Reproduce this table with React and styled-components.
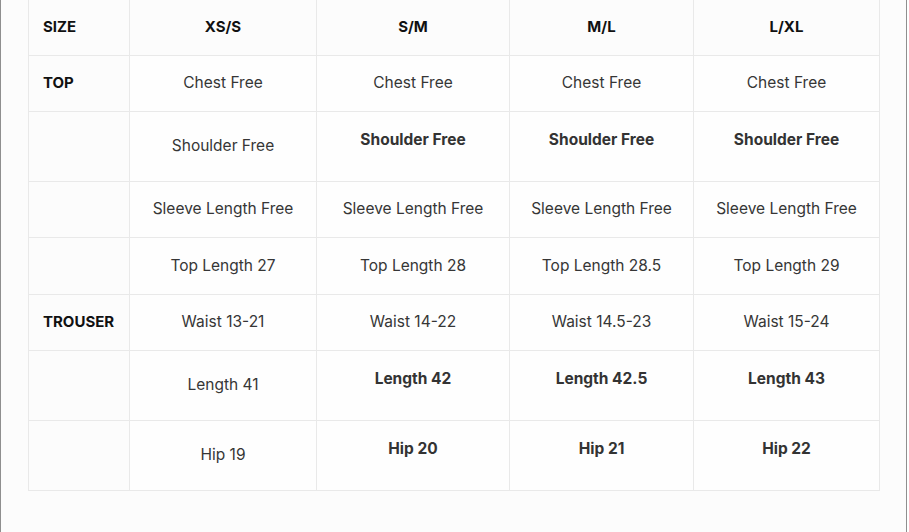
import styled, { createGlobalStyle } from "styled-components";

const GlobalStyle = createGlobalStyle`
  html, body {
    margin: 0;
    padding: 0;
    background: #ffffff;
  }
  * {
    box-sizing: border-box;
  }
`;

const columns = ["SIZE", "XS/S", "S/M", "M/L", "L/XL"];
const widths = [101, 187, 193, 184, 186];

// rows: label, height, cells; tall rows get bold text in the later columns
const rows = [
  { label: "TOP", h: 56, cells: ["Chest Free", "Chest Free", "Chest Free", "Chest Free"] },
  { tall: true, h: 70, cells: ["Shoulder Free", "Shoulder Free", "Shoulder Free", "Shoulder Free"] },
  { h: 56, cells: ["Sleeve Length Free", "Sleeve Length Free", "Sleeve Length Free", "Sleeve Length Free"] },
  { h: 57, cells: ["Top Length 27", "Top Length 28", "Top Length 28.5", "Top Length 29"] },
  { label: "TROUSER", h: 56, cells: ["Waist 13-21", "Waist 14-22", "Waist 14.5-23", "Waist 15-24"] },
  { tall: true, h: 70, cells: ["Length 41", "Length 42", "Length 42.5", "Length 43"] },
  { tall: true, h: 70, cells: ["Hip 19", "Hip 20", "Hip 21", "Hip 22"] },
];

const Page = styled.div`
  width: 907px;
  min-height: 100vh;
  padding: 0 27px;
  background: #fcfcfc;
  border-left: 1px solid #8f8f8f;
  border-right: 1px solid #8f8f8f;
  font-family: Inter, "Liberation Sans", sans-serif;
  overflow: hidden;
`;

const Table = styled.table`
  width: 851px;
  margin-top: -1px;
  border-collapse: collapse;
  table-layout: fixed;
  color: #333333;
`;

const HeadCell = styled.th`
  height: 56px;
  padding: 0 14px 2px;
  border: 1px solid #e9e9e9;
  font-size: 15px;
  font-weight: 700;
  color: #111111;
  text-align: ${(p) => (p.$first ? "left" : "center")};
  vertical-align: middle;
`;

const LabelCell = styled.td`
  height: ${(p) => p.$h}px;
  padding: 0 14px 2px;
  border: 1px solid #e9e9e9;
  font-size: 15px;
  font-weight: 700;
  color: #111111;
  vertical-align: middle;
`;

const Cell = styled.td`
  height: ${(p) => p.$h}px;
  padding: 0 6px 2px;
  border: 1px solid #e9e9e9;
  font-size: 15.5px;
  font-weight: 400;
  color: #363636;
  text-align: center;
  vertical-align: middle;
  background: #fefefe;
`;

const Strong = styled.p`
  margin: 0 0 12px;
  font-weight: 700;
  color: #333333;
`;

export default function App() {
  return (
    <>
      <GlobalStyle />
      <Page>
        <Table>
          <colgroup>
            {widths.map((w, i) => (
              <col key={i} style={{ width: w }} />
            ))}
          </colgroup>
          <thead>
            <tr>
              {columns.map((c, i) => (
                <HeadCell key={c} $first={i === 0}>
                  {c}
                </HeadCell>
              ))}
            </tr>
          </thead>
          <tbody>
            {rows.map((r, ri) => (
              <tr key={ri}>
                <LabelCell $h={r.h}>{r.label || ""}</LabelCell>
                {r.cells.map((c, ci) => (
                  <Cell key={ci} $h={r.h}>
                    {r.tall && ci > 0 ? <Strong>{c}</Strong> : c}
                  </Cell>
                ))}
              </tr>
            ))}
          </tbody>
        </Table>
      </Page>
    </>
  );
}
